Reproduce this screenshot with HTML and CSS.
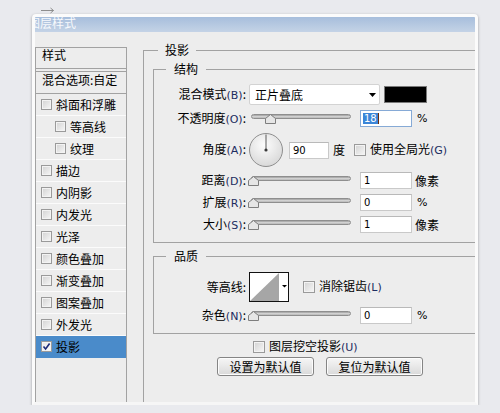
FILE: index.html
```html
<!DOCTYPE html>
<html lang="zh-CN">
<head>
<meta charset="utf-8">
<title>图层样式</title>
<link rel="stylesheet" href="styles.css">
</head>
<body>
<div class="top">
  <svg width="14" height="7" viewBox="0 0 14 7"><path d="M0 3.5H12.5M9.5 1L12.5 3.5L9.5 6" fill="none" stroke="#8e8e8e" stroke-width="1"/></svg>
</div>
<div class="dialog">
  <div class="title"><span>图层样式</span></div>
  <div class="main">
    <div class="list">
      <div class="lhead">样式</div>
      <div class="lblend">混合选项:自定</div>
      <ul class="items">
        <li><span class="cb"></span>斜面和浮雕</li>
        <li class="sub"><span class="cb"></span>等高线</li>
        <li class="sub"><span class="cb"></span>纹理</li>
        <li><span class="cb"></span>描边</li>
        <li><span class="cb"></span>内阴影</li>
        <li><span class="cb"></span>内发光</li>
        <li><span class="cb"></span>光泽</li>
        <li><span class="cb"></span>颜色叠加</li>
        <li><span class="cb"></span>渐变叠加</li>
        <li><span class="cb"></span>图案叠加</li>
        <li><span class="cb"></span>外发光</li>
        <li class="sel"><span class="cb on"><svg width="9" height="9" viewBox="0 0 9 9"><path d="M1.5 4.5L3.6 7L7.6 1.5" fill="none" stroke="#1b2a78" stroke-width="1.6"/></svg></span>投影</li>
      </ul>
    </div>

    <fieldset class="fx">
      <legend>投影</legend>

      <fieldset class="grp">
        <legend>结构</legend>
        <div class="row r-blend">
          <span class="lab">混合模式<span class="mn">(B)</span>:</span>
          <div class="select"><span>正片叠底</span><svg width="7" height="4" viewBox="0 0 7 4"><path d="M0 0H7L3.5 4Z" fill="#000"/></svg></div>
          <span class="swatch"></span>
        </div>
        <div class="row r-op">
          <span class="lab">不透明度<span class="mn">(O)</span>:</span>
          <div class="slider" style="--v:18"><span class="track"></span><svg class="thumb" width="11" height="10" viewBox="0 0 11 10"><path d="M5.5 .5L10.5 4.5V9.5H.5V4.5Z" fill="#e6e6e6" stroke="#7e7e7e"/></svg></div>
          <span class="num focus"><span class="hl">18</span><span class="caret"></span></span>
          <span class="pct">%</span>
        </div>
        <div class="row r-ang">
          <span class="lab">角度<span class="mn">(A)</span>:</span>
          <svg class="dial" width="34" height="34" viewBox="0 0 34 34"><defs><radialGradient id="dg" cx="45%" cy="35%" r="70%"><stop offset="0" stop-color="#fdfdfd"/><stop offset="1" stop-color="#d6d6d6"/></radialGradient></defs><circle cx="17" cy="17" r="16.5" fill="url(#dg)" stroke="#8e8e8e"/><path d="M17 17V1.5" stroke="#5a5a5a" stroke-width="1"/><circle cx="17" cy="17" r="1.6" fill="#3a3a3a"/></svg>
          <span class="num ang">90</span>
          <span class="deg">度</span>
          <span class="rcb gl"></span>
          <span class="ctext">使用全局光<span class="mn">(G)</span></span>
        </div>
        <div class="row r-sl">
          <span class="lab">距离<span class="mn">(D)</span>:</span>
          <div class="slider" style="--v:0"><span class="track"></span><svg class="thumb" width="11" height="10" viewBox="0 0 11 10"><path d="M5.5 .5L10.5 4.5V9.5H.5V4.5Z" fill="#e6e6e6" stroke="#7e7e7e"/></svg></div>
          <span class="num">1</span>
          <span class="unit">像素</span>
        </div>
        <div class="row r-sl">
          <span class="lab">扩展<span class="mn">(R)</span>:</span>
          <div class="slider" style="--v:0"><span class="track"></span><svg class="thumb" width="11" height="10" viewBox="0 0 11 10"><path d="M5.5 .5L10.5 4.5V9.5H.5V4.5Z" fill="#e6e6e6" stroke="#7e7e7e"/></svg></div>
          <span class="num">0</span>
          <span class="pct">%</span>
        </div>
        <div class="row r-sl">
          <span class="lab">大小<span class="mn">(S)</span>:</span>
          <div class="slider" style="--v:0"><span class="track"></span><svg class="thumb" width="11" height="10" viewBox="0 0 11 10"><path d="M5.5 .5L10.5 4.5V9.5H.5V4.5Z" fill="#e6e6e6" stroke="#7e7e7e"/></svg></div>
          <span class="num">1</span>
          <span class="unit">像素</span>
        </div>
      </fieldset>

      <fieldset class="grp q">
        <legend>品质</legend>
        <div class="row r-ct">
          <span class="lab">等高线:</span>
          <span class="contour"><svg width="38" height="28" viewBox="0 0 38 28"><rect width="38" height="28" fill="#fff"/><path d="M0 28L29 0V28Z" fill="#a6a6a6"/><path d="M32 12H37L34.5 14.5Z" fill="#000"/></svg></span>
          <span class="rcb aa"></span>
          <span class="ctext">消除锯齿<span class="mn">(L)</span></span>
        </div>
        <div class="row r-sl r-noise">
          <span class="lab">杂色<span class="mn">(N)</span>:</span>
          <div class="slider" style="--v:0"><span class="track"></span><svg class="thumb" width="11" height="10" viewBox="0 0 11 10"><path d="M5.5 .5L10.5 4.5V9.5H.5V4.5Z" fill="#e6e6e6" stroke="#7e7e7e"/></svg></div>
          <span class="num">0</span>
          <span class="pct">%</span>
        </div>
      </fieldset>

      <div class="knock"><span class="rcb"></span><span class="ctext">图层挖空投影<span class="mn">(U)</span></span></div>
      <div class="btns">
        <button class="btn">设置为默认值</button>
        <button class="btn">复位为默认值</button>
      </div>
    </fieldset>
  </div>
</div>
</body>
</html>
```

FILE: styles.css
```css
* { box-sizing: border-box; }

body {
  margin: 0;
  background: #e9eaee;
  font: 12px/16px "Noto Sans CJK SC", "Noto Sans", sans-serif;
  color: #000;
}

.top {
  height: 14px;
  padding: 7px 0 0 41px;
}
.top svg { display: block; }

.dialog {
  margin-left: 32px;
  width: 446px;
  height: 391px;
  border: 3px solid #fbfbfb;
  border-bottom-color: #f6f6f6;
  border-radius: 4px 4px 0 0;
  box-shadow: 0 1px 3px rgba(0, 0, 0, 0.35);
  background: #ededed;
  overflow: hidden;
  display: flex;
  flex-direction: column;
}

.title {
  flex: none;
  height: 15px;
  background: linear-gradient(#a7bedc, #c4d3e6);
  color: #f7f9fc;
  line-height: 11px;
  overflow: hidden;
  white-space: nowrap;
}
.title span {
  display: inline-block;
  margin-left: -7px;
}

.main {
  flex: 1;
  min-height: 0;
  display: flex;
}

/* style list */
.list {
  flex: none;
  width: 92px;
  margin-top: 15px;
  border: 1px solid #a2a2a2;
  border-bottom: none;
}
.lhead {
  height: 21px;
  border-bottom: 1px solid #a2a2a2;
  padding-left: 6px;
  line-height: 14px;
}
.lblend {
  margin-top: 2px;
  height: 23px;
  border-top: 1px solid #a2a2a2;
  border-bottom: 1px solid #a2a2a2;
  padding-left: 6px;
  line-height: 16px;
  white-space: nowrap;
}
.items {
  list-style: none;
  margin: 0;
  padding: 0;
}
.items li {
  height: 22px;
  border-bottom: 1px solid #fbfbfb;
  display: flex;
  align-items: center;
  padding-left: 5px;
  white-space: nowrap;
}
.items li.sub { padding-left: 19px; }
.items li.sel {
  background: #4a8bca;
  border-bottom-color: #4a8bca;
}

.cb, .rcb {
  flex: none;
  display: flex;
  align-items: center;
  justify-content: center;
  width: 11px;
  height: 11px;
  border: 1px solid #9a9a9a;
  background: linear-gradient(135deg, #d2d2d2, #f7f7f7);
  box-shadow: inset 0 0 0 1px #f3f3f3;
  margin-right: 4px;
}
.cb.on { background: linear-gradient(135deg, #e6e6e6, #fdfdfd); }
.cb svg { display: block; }
.rcb {
  width: 12px;
  height: 12px;
}

/* right panel */
.fx {
  flex: 1;
  min-width: 0;
  margin: 11px 0 0 16px;
  padding: 0 0 0 9px;
  border: 1px solid #a2a2a2;
  border-right: none;
  border-bottom: none;
}
.fx > legend {
  margin-left: 5px;
  padding: 0 7px;
  line-height: 14px;
}

.grp {
  min-width: 0;
  margin: 5px 0 0;
  padding: 0 0 9px;
  border: 1px solid #a2a2a2;
  border-right: none;
}
.grp.q { margin-top: 6px; }
.grp > legend {
  margin-left: 12px;
  padding: 0 8px;
  line-height: 14px;
}

.row {
  display: flex;
  align-items: center;
  white-space: nowrap;
}
.lab {
  flex: none;
  width: 92px;
  margin-right: 3px;
  text-align: right;
}
.mn {
  font-family: "DejaVu Sans", sans-serif;
  font-size: 11px;
  color: #1c2c60;
}

.r-blend { margin-top: 8px; height: 21px; }
.r-op { margin-top: 5px; height: 17px; }
.r-ang { margin-top: 6px; height: 34px; }
.r-sl { margin-top: 5px; height: 17px; }
.r-ct { margin-top: 9px; height: 30px; }
.r-noise { margin-top: 5px; }

.select {
  flex: none;
  width: 131px;
  height: 21px;
  display: flex;
  align-items: center;
  justify-content: space-between;
  padding: 0 3px 0 5px;
  background: #fff;
  border: 1px solid #d3d3d3;
  border-radius: 2px;
}
.select svg { display: block; }

.swatch {
  flex: none;
  width: 43px;
  height: 17px;
  margin-left: 4px;
  border: 1px solid #7a7a7a;
  background: #000;
}

.slider {
  position: relative;
  flex: none;
  width: 102px;
  height: 17px;
}
.track {
  display: block;
  width: 100px;
  height: 5px;
  margin: 4px 0 0 2px;
  border-radius: 3px;
  border: 1px solid #8e8e8e;
  background: linear-gradient(#9d9d9d, #d6d6d6 55%, #b4b4b4);
}
.thumb {
  position: absolute;
  top: 4px;
  left: calc(var(--v) * 0.944px - 1px);
  display: block;
}

.num {
  flex: none;
  width: 52px;
  height: 17px;
  margin-left: 9px;
  padding-left: 3px;
  background: #fff;
  border: 1px solid #c9c9c9;
  border-top-color: #b9b9b9;
  font: 10px/15px "DejaVu Sans", sans-serif;
  color: #000;
}
.num.focus {
  border-color: #86aad6;
  padding-left: 2px;
  display: flex;
  align-items: center;
}
.hl {
  background: #3b86d8;
  color: #fff;
  padding: 0 1px;
  line-height: 11px;
}
.caret {
  width: 1px;
  height: 11px;
  background: #6a2c0c;
}

.pct {
  margin-left: 5px;
  font: 11px "DejaVu Sans", sans-serif;
}
.unit { margin-left: 3px; }

.dial { flex: none; display: block; }
.num.ang {
  width: 40px;
  margin-left: 6px;
}
.deg { margin-left: 4px; }
.rcb.gl { margin-left: 9px; }
.ctext { white-space: nowrap; }

.contour {
  flex: none;
  width: 40px;
  height: 30px;
  border: 1px solid #111;
  background: #fff;
}
.contour svg { display: block; }
.rcb.aa { margin-left: 14px; }

.knock {
  margin-top: 6px;
  height: 14px;
  padding-left: 100px;
  display: flex;
  align-items: center;
}

.btns {
  margin-top: 3px;
  padding-left: 64px;
  display: flex;
  gap: 12px;
}
.btn {
  width: 97px;
  height: 19px;
  padding: 0;
  border: 1px solid #858585;
  border-radius: 3px;
  background: linear-gradient(#f6f6f6, #e8e8e8 50%, #d9d9d9);
  box-shadow: inset 0 0 0 1px #fcfcfc;
  font: 12px/17px "Noto Sans CJK SC", "Noto Sans", sans-serif;
  color: #000;
}
```
